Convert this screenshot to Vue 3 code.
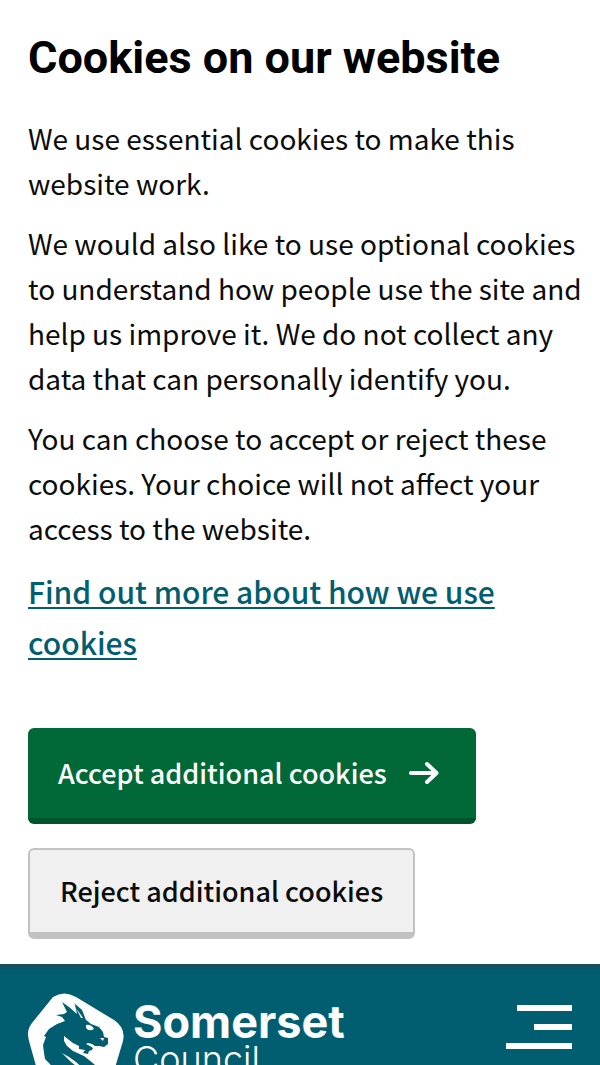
<template>
  <div class="page">
    <section v-if="!choice" class="cookie-banner" aria-labelledby="cookie-title">
      <h2 id="cookie-title" class="cookie-title">Cookies on our website</h2>
      <p v-for="(text, i) in paragraphs" :key="i" class="cookie-text">{{ text }}</p>
      <a class="cookie-link" href="#cookies">Find out more about how we use cookies</a>

      <div class="cookie-actions">
        <button type="button" class="btn btn-accept" @click="choice = 'accept'">
          Accept additional cookies
          <svg class="btn-arrow" viewBox="0 0 30 24" aria-hidden="true">
            <path d="M2 12H27M18 3L27.500 12L18 21" />
          </svg>
        </button>
        <button type="button" class="btn btn-reject" @click="choice = 'reject'">
          Reject additional cookies
        </button>
      </div>
    </section>

    <header class="site-header">
      <a class="brand" href="#home">
        <svg class="brand-mark" viewBox="0 0 96 108" aria-hidden="true">
          <path
            class="shield"
            d="M25 4Q36 -3 48 4L86 27Q98 35 95 48L83 88Q80 98 69 101L31 107Q20 108 15 98L1 48Q-2 37 4 30Z"
          />
          <!-- head, horns and neck -->
          <path
            class="dragon"
            d="M34 9L41 14L49 21L47 12L53 18L57 26L63 31L71 34L75 39L76 44L80 45V51L76 54L71 53L67 53L64 51L60 50L58 51L62 53L65 55L64 57L61 58L60 61L55 60L57 57L51 56L51 53L45 50L41 47L36 43L36 48L39 53L45 58L56 63L66 71L74 80L78 92L64 100H27Q31 88 25 76L22 71L17 66L16 60L15 52L18 44L16 43L21 36L29 31L37 28L34 24L28 22L36 21L39 19Z"
          />
          <path class="shield" d="M58 32Q63 31 66 36Q61 39 58 35ZM72 45L76 45L75 48Z" />
          <!-- neck highlight -->
          <path class="shield" d="M34 60Q42 64 48 69L58 78L52 76L43 69Z" />
          <path class="dragon" d="M46 10L54 17L58 27L53 23Z" />
          <path class="shield" d="M48 15L55 25L53 25Z" />
        </svg>
        <span class="brand-name">
          <span class="brand-strong">Somerset</span>
          <span class="brand-light">Council</span>
        </span>
      </a>
      <button type="button" class="menu-toggle" aria-label="Menu">
        <span class="menu-bar bar-mid" />
        <span class="menu-bar bar-short" />
        <span class="menu-bar" />
      </button>
    </header>
  </div>
</template>

<script setup>
import { ref } from 'vue'

const choice = ref('')

const paragraphs = [
  'We use essential cookies to make this website work.',
  'We would also like to use optional cookies to understand how people use the site and help us improve it. We do not collect any data that can personally identify you.',
  'You can choose to accept or reject these cookies. Your choice will not affect your access to the website.'
]
</script>

<style>
body {
  margin: 0;
  background: #fff;
}
</style>

<style scoped>
.page {
  font-family: "Noto Sans CJK SC", "Noto Sans", sans-serif;
  color: #0b0c0c;
}

/* cookie banner */
.cookie-banner {
  padding: 28px 16px 25px 28px;
}
.cookie-title {
  margin: 0 0 28px;
  font-family: Roboto, "Liberation Sans", sans-serif;
  font-size: 45px;
  line-height: 60px;
  font-weight: 700;
  color: #000;
}
.cookie-text {
  margin: 0 0 15px;
  font-size: 28px;
  line-height: 45px;
}
.cookie-link {
  display: block;
  font-size: 30px;
  line-height: 51px;
  font-weight: 500;
  color: #005e70;
  text-decoration: underline;
  text-decoration-thickness: 2px;
  text-underline-offset: 3px;
}
.cookie-actions {
  display: flex;
  flex-direction: column;
  align-items: flex-start;
  gap: 24px;
  margin-top: 60px;
}

/* buttons */
.btn {
  display: flex;
  align-items: center;
  font-family: inherit;
  font-size: 27px;
  line-height: 42px;
  font-weight: 500;
  border-radius: 6px;
  cursor: pointer;
}
.btn-accept {
  gap: 22px;
  padding: 24px 37px 24px 30px;
  border: 0;
  border-bottom: 6px solid #00542d;
  background: #006937;
  color: #fff;
}
.btn-arrow {
  width: 30px;
  height: 24px;
  fill: none;
  stroke: currentColor;
  stroke-width: 4;
  stroke-linecap: round;
  stroke-linejoin: round;
}
.btn-reject {
  padding: 20px 30px;
  border: 2px solid #c2c2c2;
  border-bottom-width: 7px;
  background: #f0f0f0;
  color: #0b0c0c;
}

/* header */
.site-header {
  display: flex;
  justify-content: space-between;
  align-items: flex-start;
  padding: 29px 28px;
  background: linear-gradient(#1e4a55, #005e70 6px);
}
.brand {
  display: flex;
  gap: 9px;
  color: #fff;
  text-decoration: none;
}
.brand-mark {
  width: 96px;
  height: 108px;
}
.shield {
  fill: #fff;
}
.dragon {
  fill: #005e70;
}
.brand-name {
  display: flex;
  flex-direction: column;
  padding-top: 8px;
  font-family: Inter, "Liberation Sans", sans-serif;
}
.brand-strong {
  font-size: 45px;
  line-height: 42px;
  font-weight: 700;
}
.brand-light {
  font-size: 36px;
  line-height: 32px;
  font-weight: 300;
}
.menu-toggle {
  display: flex;
  flex-direction: column;
  align-items: flex-end;
  gap: 13px;
  margin: 12px 0 0;
  padding: 0;
  border: 0;
  background: none;
  cursor: pointer;
}
.menu-bar {
  width: 66px;
  height: 6px;
  background: #fff;
}
.bar-mid {
  width: 55px;
}
.bar-short {
  width: 38px;
}
</style>
